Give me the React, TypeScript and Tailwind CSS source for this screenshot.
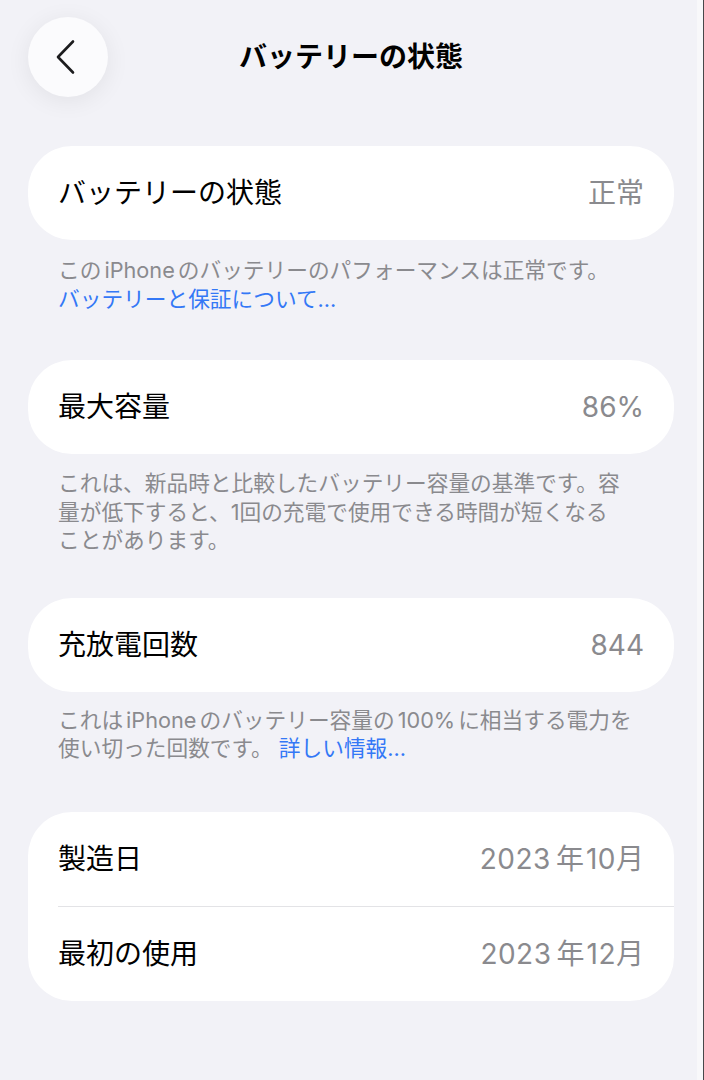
import type { ReactNode } from "react";

const FONT = "font-['Inter','Noto_Sans_CJK_JP',sans-serif]";

function Row({ label, value }: { label: string; value: ReactNode }) {
  return (
    <div className="flex h-[94px] items-center justify-between px-[30px]">
      <span className="text-[28px] text-black">{label}</span>
      <span className="text-[28px] text-[#8a8a8e]">{value}</span>
    </div>
  );
}

function Card({ children, className = "" }: { children: ReactNode; className?: string }) {
  return <div className={`rounded-[44px] bg-white ${className}`}>{children}</div>;
}

function Footer({ children, className = "" }: { children: ReactNode; className?: string }) {
  return (
    <p className={`whitespace-nowrap px-[30px] text-[21.7px] leading-[28.5px] text-[#8a8a8e] ${className}`}>
      {children}
    </p>
  );
}

const Latin = ({ children }: { children: ReactNode }) => <span className="mx-[3px]">{children}</span>;

function YearMonth({ year, month }: { year: string; month: string }) {
  return (
    <>
      <span className="tracking-[0.5px]">{year}</span>
      <span className="ml-[5px] mr-[2px]">年</span>
      <span className="tracking-[0.5px]">{month}</span>月
    </>
  );
}

export default function App() {
  return (
    <div className={`flex min-h-[1080px] w-[704px] bg-[#f2f2f7] ${FONT}`}>
      <div className="w-[697px] pl-[28px] pr-[23px]">
        {/* header */}
        <div className="relative mt-[17px] flex h-[80px] items-center justify-center">
          <button className="absolute left-0 top-0 flex h-[80px] w-[80px] items-center justify-center rounded-full bg-[#fbfbfd] shadow-[0_4px_24px_rgba(0,0,0,0.07)]">
            <svg width="22" height="36" viewBox="0 0 22 36" fill="none" className="-ml-[4px]">
              <path d="M18 2.5 L3 18 L18 33.5" stroke="#1c1c1e" strokeWidth="2.6" strokeLinecap="round" strokeLinejoin="round" />
            </svg>
          </button>
          <h1 className="text-[28px] font-bold text-black">バッテリーの状態</h1>
        </div>

        <Card className="mt-[49px]">
          <Row label="バッテリーの状態" value="正常" />
        </Card>
        <Footer className="mt-[16px]">
          この<Latin>iPhone</Latin>のバッテリーのパフォーマンスは正常です。
          <br />
          <span className="text-[#3478f6]">バッテリーと保証について...</span>
        </Footer>

        <Card className="mt-[47px]">
          <Row label="最大容量" value="86%" />
        </Card>
        <Footer className="mt-[15px]">
          これは、新品時と比較したバッテリー容量の基準です。容
          <br />
          量が低下すると、1回の充電で使用できる時間が短くなる
          <br />
          ことがあります。
        </Footer>

        <Card className="mt-[43px]">
          <Row label="充放電回数" value="844" />
        </Card>
        <Footer className="mt-[14px]">
          これは<Latin>iPhone</Latin>のバッテリー容量の<Latin>100%</Latin>に相当する電力を
          <br />
          使い切った回数です。 <span className="text-[#3478f6]">詳しい情報...</span>
        </Footer>

        <Card className="mt-[49px]">
          <Row label="製造日" value={<YearMonth year="2023" month="10" />} />
          <div className="ml-[30px] h-px bg-[#e3e3e6]" />
          <Row label="最初の使用" value={<YearMonth year="2023" month="12" />} />
        </Card>
      </div>
      <div className="w-[6px] bg-[#f8f8fa]" />
      <div className="w-px bg-[#48484a]" />
    </div>
  );
}
